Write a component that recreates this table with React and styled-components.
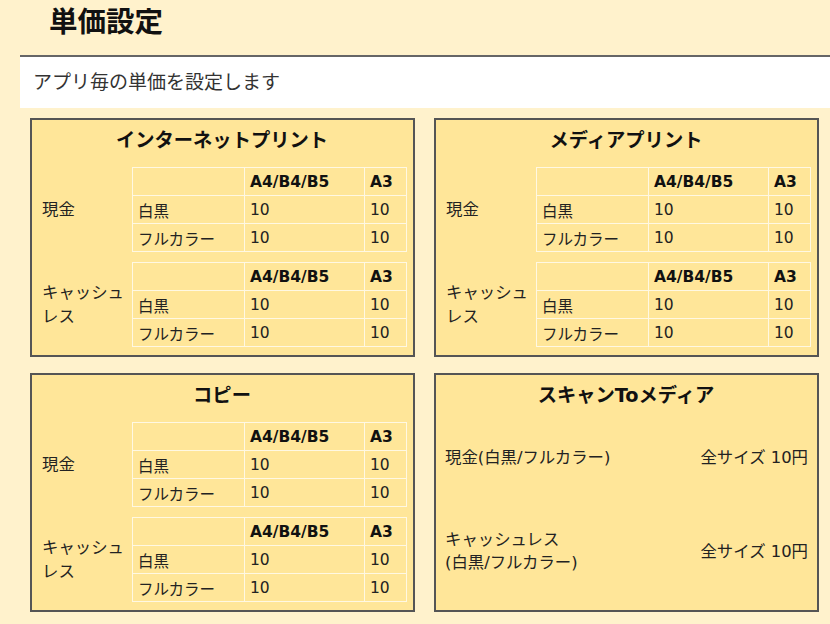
import React from "react";
import styled, { createGlobalStyle } from "styled-components";

const GlobalStyle = createGlobalStyle`
  html, body {
    margin: 0;
    padding: 0;
    background-color: #fff2cc;
  }
  body {
    font-family: "DejaVu Sans", "Noto Sans CJK JP", sans-serif;
    color: #222;
  }
`;

const Page = styled.div`
  width: 830px;
  min-height: 624px;
  background-color: #fff2cc;
  overflow: hidden;
`;

const Heading = styled.h1`
  margin: 0;
  height: 55px;
  padding-left: 49px;
  display: flex;
  align-items: center;
  font-family: "Noto Sans CJK JP", sans-serif;
  font-size: 28.5px;
  font-weight: 700;
  color: #111;
  line-height: 1;
  padding-bottom: 15px;
  box-sizing: border-box;
`;

const Description = styled.div`
  margin-left: 20px;
  height: 53px;
  background-color: #fff;
  border-top: 2px solid #666;
  box-sizing: border-box;
  display: flex;
  align-items: center;
  padding: 0 0 4px 13px;
  font-size: 19px;
  color: #333;
`;

const Grid = styled.div`
  display: grid;
  grid-template-columns: 385px 385px;
  column-gap: 19px;
  row-gap: 16px;
  padding: 10px 0 0 30px;
`;

const Card = styled.section`
  background-color: #ffe699;
  border: 2px solid #555;
  box-sizing: border-box;
  padding: 6px 9px 8px 8px;
  display: flex;
  flex-direction: column;
`;

const CardTitle = styled.h2`
  margin: 0;
  height: 30px;
  line-height: 30px;
  text-align: center;
  font-size: 19.3px;
  font-weight: 700;
  color: #111;
`;

const Group = styled.div`
  display: flex;
  align-items: center;
  margin-top: ${(props) => props.$gap || "10px"};
`;

const GroupLabel = styled.div`
  width: 90px;
  padding-left: 2px;
  font-size: 16.4px;
  line-height: 24px;
  flex-shrink: 0;
`;

const PriceTable = styled.table`
  width: 274px;
  border-collapse: collapse;
  table-layout: fixed;
  font-size: 15.5px;
`;

const Cell = styled.td`
  height: 27px;
  border: 1.5px solid #fff8e3;
  padding: 0 0 0 5px;
  font-weight: ${(props) => (props.$head ? 700 : 400)};
  color: ${(props) => (props.$head ? "#111" : "#222")};
  white-space: nowrap;
`;

const ScanBody = styled.div`
  display: flex;
  flex-direction: column;
  margin-top: -1px;
`;

const ScanRow = styled.div`
  height: 94px;
  display: flex;
  align-items: center;
  justify-content: space-between;
  padding: 0 0 0 1px;
  font-size: 16.4px;
  line-height: 23px;
`;

const prices = [
  ["白黒", "10", "10"],
  ["フルカラー", "10", "10"],
];

const Table = () => (
  <PriceTable>
    <colgroup>
      <col style={{ width: 112 }} />
      <col style={{ width: 120 }} />
      <col style={{ width: 42 }} />
    </colgroup>
    <tbody>
      <tr>
        <Cell />
        <Cell $head>A4/B4/B5</Cell>
        <Cell $head>A3</Cell>
      </tr>
      {prices.map((row) => (
        <tr key={row[0]}>
          {row.map((v, i) => (
            <Cell key={i}>{v}</Cell>
          ))}
        </tr>
      ))}
    </tbody>
  </PriceTable>
);

const PrintCard = ({ title }) => (
  <Card>
    <CardTitle>{title}</CardTitle>
    <Group $gap="11px">
      <GroupLabel>現金</GroupLabel>
      <Table />
    </Group>
    <Group>
      <GroupLabel>キャッシュレス</GroupLabel>
      <Table />
    </Group>
  </Card>
);

const App = () => {
  return (
    <Page>
      <GlobalStyle />
      <Heading>単価設定</Heading>
      <Description>アプリ毎の単価を設定します</Description>
      <Grid>
        <PrintCard title="インターネットプリント" />
        <PrintCard title="メディアプリント" />
        <PrintCard title="コピー" />
        <Card>
          <CardTitle>スキャンToメディア</CardTitle>
          <ScanBody>
            <ScanRow>
              <span>現金(白黒/フルカラー)</span>
              <span>全サイズ 10円</span>
            </ScanRow>
            <ScanRow>
              <span>
                キャッシュレス
                <br />
                (白黒/フルカラー)
              </span>
              <span>全サイズ 10円</span>
            </ScanRow>
          </ScanBody>
        </Card>
      </Grid>
    </Page>
  );
};

export default App;
